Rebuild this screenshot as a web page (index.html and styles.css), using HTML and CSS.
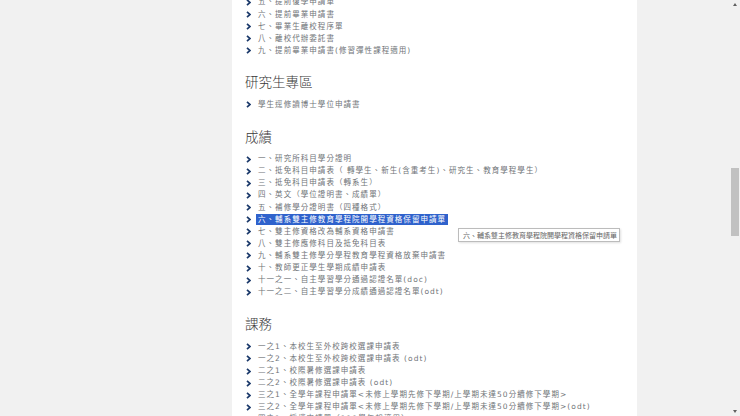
FILE: index.html
```html
<!DOCTYPE html>
<html lang="zh-Hant">
<head>
<meta charset="utf-8">
<title>表單下載</title>
<link rel="stylesheet" href="styles.css">
</head>
<body>
<div class="page">
  <main class="panel">
    <ul class="list list-first">
      <li class="item"><svg class="chev" viewBox="0 0 5 7"><polyline points="1,0.8 4,3.5 1,6.2"/></svg><a class="link">五、提前復學申請單</a></li>
      <li class="item"><svg class="chev" viewBox="0 0 5 7"><polyline points="1,0.8 4,3.5 1,6.2"/></svg><a class="link">六、提前畢業申請書</a></li>
      <li class="item"><svg class="chev" viewBox="0 0 5 7"><polyline points="1,0.8 4,3.5 1,6.2"/></svg><a class="link">七、畢業生離校程序單</a></li>
      <li class="item"><svg class="chev" viewBox="0 0 5 7"><polyline points="1,0.8 4,3.5 1,6.2"/></svg><a class="link">八、離校代辦委託書</a></li>
      <li class="item"><svg class="chev" viewBox="0 0 5 7"><polyline points="1,0.8 4,3.5 1,6.2"/></svg><a class="link">九、提前畢業申請書(修習彈性課程適用)</a></li>
    </ul>

    <h2 class="heading heading-first">研究生專區</h2>
    <ul class="list">
      <li class="item"><svg class="chev" viewBox="0 0 5 7"><polyline points="1,0.8 4,3.5 1,6.2"/></svg><a class="link">學生逕修讀博士學位申請書</a></li>
    </ul>

    <h2 class="heading">成績</h2>
    <ul class="list">
      <li class="item"><svg class="chev" viewBox="0 0 5 7"><polyline points="1,0.8 4,3.5 1,6.2"/></svg><a class="link">一、研究所科目學分證明</a></li>
      <li class="item"><svg class="chev" viewBox="0 0 5 7"><polyline points="1,0.8 4,3.5 1,6.2"/></svg><a class="link">二、抵免科目申請表（ 轉學生、新生(含重考生)、研究生、教育學程學生）</a></li>
      <li class="item"><svg class="chev" viewBox="0 0 5 7"><polyline points="1,0.8 4,3.5 1,6.2"/></svg><a class="link">三、抵免科目申請表（轉系生）</a></li>
      <li class="item"><svg class="chev" viewBox="0 0 5 7"><polyline points="1,0.8 4,3.5 1,6.2"/></svg><a class="link">四、英文（學位證明書、成績單）</a></li>
      <li class="item"><svg class="chev" viewBox="0 0 5 7"><polyline points="1,0.8 4,3.5 1,6.2"/></svg><a class="link">五、補修學分證明書（四種格式）</a></li>
      <li class="item"><svg class="chev" viewBox="0 0 5 7"><polyline points="1,0.8 4,3.5 1,6.2"/></svg><a class="link selected">六、輔系雙主修教育學程院開學程資格保留申請單</a></li>
      <li class="item"><svg class="chev" viewBox="0 0 5 7"><polyline points="1,0.8 4,3.5 1,6.2"/></svg><a class="link">七、雙主修資格改為輔系資格申請書</a></li>
      <li class="item"><svg class="chev" viewBox="0 0 5 7"><polyline points="1,0.8 4,3.5 1,6.2"/></svg><a class="link">八、雙主修應修科目及抵免科目表</a></li>
      <li class="item"><svg class="chev" viewBox="0 0 5 7"><polyline points="1,0.8 4,3.5 1,6.2"/></svg><a class="link">九、輔系雙主修學分學程教育學程資格放棄申請書</a></li>
      <li class="item"><svg class="chev" viewBox="0 0 5 7"><polyline points="1,0.8 4,3.5 1,6.2"/></svg><a class="link">十、教師更正學生學期成績申請表</a></li>
      <li class="item"><svg class="chev" viewBox="0 0 5 7"><polyline points="1,0.8 4,3.5 1,6.2"/></svg><a class="link">十一之一、自主學習學分通過認證名單(doc)</a></li>
      <li class="item"><svg class="chev" viewBox="0 0 5 7"><polyline points="1,0.8 4,3.5 1,6.2"/></svg><a class="link">十一之二、自主學習學分成績通過認證名單(odt)</a></li>
    </ul>

    <h2 class="heading">課務</h2>
    <ul class="list">
      <li class="item"><svg class="chev" viewBox="0 0 5 7"><polyline points="1,0.8 4,3.5 1,6.2"/></svg><a class="link">一之1、本校生至外校跨校選課申請表</a></li>
      <li class="item"><svg class="chev" viewBox="0 0 5 7"><polyline points="1,0.8 4,3.5 1,6.2"/></svg><a class="link">一之2、本校生至外校跨校選課申請表 (odt)</a></li>
      <li class="item"><svg class="chev" viewBox="0 0 5 7"><polyline points="1,0.8 4,3.5 1,6.2"/></svg><a class="link">二之1、校際暑修選課申請表</a></li>
      <li class="item"><svg class="chev" viewBox="0 0 5 7"><polyline points="1,0.8 4,3.5 1,6.2"/></svg><a class="link">二之2、校際暑修選課申請表 (odt)</a></li>
      <li class="item"><svg class="chev" viewBox="0 0 5 7"><polyline points="1,0.8 4,3.5 1,6.2"/></svg><a class="link">三之1、全學年課程申請單&lt;未修上學期先修下學期/上學期未達50分續修下學期&gt;</a></li>
      <li class="item"><svg class="chev" viewBox="0 0 5 7"><polyline points="1,0.8 4,3.5 1,6.2"/></svg><a class="link">三之2、全學年課程申請單&lt;未修上學期先修下學期/上學期未達50分續修下學期&gt;(odt)</a></li>
      <li class="item"><svg class="chev" viewBox="0 0 5 7"><polyline points="1,0.8 4,3.5 1,6.2"/></svg><a class="link">四之1、授權申請單（111學年起適用）</a></li>
    </ul>
  </main>
</div>

<div class="tooltip">六、輔系雙主修教育學程院開學程資格保留申請單</div>

<div class="scrollbar">
  <span class="arrow arrow-up"></span>
  <span class="thumb"></span>
  <span class="arrow arrow-down"></span>
</div>
</body>
</html>
```

FILE: styles.css
```css
html, body {
  margin: 0;
  padding: 0;
  height: 100%;
  overflow: hidden;
}

body {
  background: #f1f1f1;
  font-family: "Noto Sans CJK TC", "Noto Sans", sans-serif;
}

.page {
  display: flex;
  height: 100%;
}

.panel {
  margin-left: 232px;
  width: 392px;
  padding-left: 13px;
  background: #ffffff;
  min-height: 100%;
}

.list {
  list-style: none;
  margin: 0;
  padding: 0 0 0 1px;
}

.list-first {
  margin-top: -3.6px;
}

.item {
  display: flex;
  align-items: center;
  height: 12.1px;
  font-family: "DejaVu Sans", "Noto Sans CJK TC", sans-serif;
  font-size: 7.5px;
  line-height: 12.1px;
  letter-spacing: 1.05px;
  white-space: nowrap;
}

.chev {
  width: 5px;
  height: 7px;
  flex: none;
  margin-right: 7px;
}

.chev polyline {
  fill: none;
  stroke: #1c3a6b;
  stroke-width: 1.7;
}

.link {
  color: #707478;
}

.selected {
  background: #2f62cc;
  color: #ffffff;
  margin-left: -2px;
  padding: 0 2px;
  line-height: 11px;
}

.heading {
  margin: 15px 0 7.5px;
  font-size: 13.5px;
  line-height: 20px;
  font-weight: 300;
  color: #3a3a3a;
  letter-spacing: 0;
}

.heading-first {
  margin-top: 14.2px;
}

.tooltip {
  position: absolute;
  left: 458px;
  top: 228px;
  width: 162px;
  height: 14px;
  box-sizing: border-box;
  padding-left: 4px;
  background: #ffffff;
  border: 1px solid #bcbcbc;
  box-shadow: 1px 1px 2px rgba(0, 0, 0, 0.12);
  font-size: 7px;
  line-height: 12px;
  color: #666666;
  white-space: nowrap;
}

.scrollbar {
  position: fixed;
  right: 0;
  top: 0;
  width: 10px;
  height: 100%;
  background: #f1f1f1;
}

.thumb {
  position: absolute;
  left: 1px;
  top: 168px;
  width: 8px;
  height: 68px;
  background: #c1c1c1;
}

.arrow {
  position: absolute;
  left: 3px;
  width: 0;
  height: 0;
  border-left: 2px solid transparent;
  border-right: 2px solid transparent;
}

.arrow-up {
  top: 3px;
  border-bottom: 3px solid #606060;
}

.arrow-down {
  bottom: 3px;
  border-top: 3px solid #606060;
}
```
